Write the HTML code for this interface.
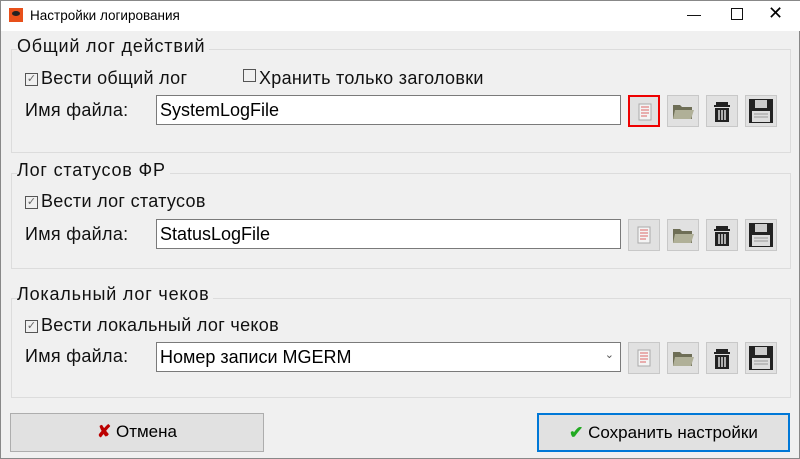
<!DOCTYPE html><html><head><style>
body{margin:0;width:800px;height:459px;background:#f0f0f0;font-family:"Liberation Sans",sans-serif;position:relative;overflow:hidden;border:1px solid #888;box-sizing:border-box}
.a{position:absolute}
.tb{left:0;top:0;width:800px;height:30px;background:#fff}
.g{border:1px solid #dcdcdc;left:10px;width:778px}
.gt{font-size:18px;letter-spacing:0.8px;color:#111;background:#f0f0f0;padding-right:4px}
.t{font-size:18px;letter-spacing:0.3px;color:#111}
.in{background:#fff;border:1px solid #7a7a7a;left:155px;width:465px;height:30px;box-sizing:border-box;font-size:18px;padding:4px 3px}
.ib{width:32px;height:32px;border:1px solid #c8c8c8;background:#e1e1e1;box-sizing:border-box}
.cb{display:inline-block;width:11px;height:11px;border:1px solid #555;font-size:11px;line-height:10px;text-align:center;vertical-align:2px;margin-right:3px;color:#666;letter-spacing:0}
.btn{background:#e1e1e1;border:1px solid #adadad;box-sizing:border-box;font-size:17px;text-align:center;line-height:36px}
</style></head><body>
<div class="a tb"></div>
<div class="a" style="left:8px;top:7px;width:14px;height:14px;background:#e8501a"><div style="margin:3px 3px;width:8px;height:5px;background:#222;border-radius:50%"></div></div>
<div class="a" style="left:29px;top:7px;font-size:13.5px">Настройки логирования</div>
<div class="a" style="left:686px;top:5px;font-size:14px">—</div>
<div class="a" style="left:730px;top:7px;width:10px;height:10px;border:1px solid #111"></div>
<div class="a" style="left:767px;top:2px;font-size:18px">✕</div>

<div class="a g" style="top:48px;height:102px"></div>
<div class="a gt" style="left:16px;top:35px">Общий лог действий</div>
<div class="a t" style="left:24px;top:67px"><span class="cb">✓</span>Вести общий лог</div>
<div class="a t" style="left:242px;top:67px"><span class="cb"></span>Хранить только заголовки</div>
<div class="a t" style="left:24px;top:99px">Имя файла:</div>
<div class="a in" style="top:94px">SystemLogFile</div>

<div class="a g" style="top:172px;height:94px"></div>
<div class="a gt" style="left:16px;top:159px">Лог статусов ФР</div>
<div class="a t" style="left:24px;top:190px"><span class="cb">✓</span>Вести лог статусов</div>
<div class="a t" style="left:24px;top:223px">Имя файла:</div>
<div class="a in" style="top:218px">StatusLogFile</div>

<div class="a g" style="top:297px;height:98px"></div>
<div class="a gt" style="left:16px;top:283px">Локальный лог чеков</div>
<div class="a t" style="left:24px;top:314px"><span class="cb">✓</span>Вести локальный лог чеков</div>
<div class="a t" style="left:24px;top:345px">Имя файла:</div>
<div class="a in" style="top:341px">Номер записи MGERM<span style="position:absolute;right:6px;top:5px;font-size:11px;color:#555">⌄</span></div>

<div id="icons"></div>
<script>
var ys=[94,218,341],h='';
ys.forEach(function(y,i){
h+='<div class="a ib" style="left:627px;top:'+y+'px;'+(i==0?'border:2px solid #e00;':'')+'"><svg width="30" height="30" viewBox="0 0 30 30"><rect x="9" y="7" width="12" height="16" fill="#f4f4f4" stroke="#aaa"/><path d="M11 10h8M11 13h8M11 16h8M11 19h6" stroke="#d66" /></svg></div>';
h+='<div class="a ib" style="left:666px;top:'+y+'px"><svg width="30" height="30"><path d="M5 9h7l2 2h10v12H5z" fill="#6e6e56"/><path d="M7 14h19l-3 9H5z" fill="#b0b098"/></svg></div>';
h+='<div class="a ib" style="left:705px;top:'+y+'px"><svg width="30" height="30"><rect x="9" y="6" width="12" height="3" fill="#222"/><rect x="7" y="9" width="16" height="2" fill="#222"/><rect x="8" y="12" width="14" height="14" fill="#222"/><path d="M12 14v10M15 14v10M18 14v10" stroke="#ddd" stroke-width="1.5"/></svg></div>';
h+='<div class="a ib" style="left:744px;top:'+y+'px"><svg width="30" height="30"><rect x="3" y="3" width="24" height="24" fill="#222"/><rect x="9" y="4" width="12" height="8" fill="#ccc"/><rect x="6" y="15" width="18" height="11" fill="#ddd"/><path d="M8 18h14M8 21h14" stroke="#999"/></svg></div>';
});
document.getElementById('icons').innerHTML=h;
</script>

<div class="a btn" style="left:9px;top:412px;width:254px;height:39px"><span style="color:#b00;font-weight:bold">✘</span> Отмена</div>
<div class="a btn" style="left:536px;top:412px;width:253px;height:39px;border:2px solid #0078d7;line-height:35px"><span style="color:#2a2;font-weight:bold">✔</span> Сохранить настройки</div>
</body></html>
